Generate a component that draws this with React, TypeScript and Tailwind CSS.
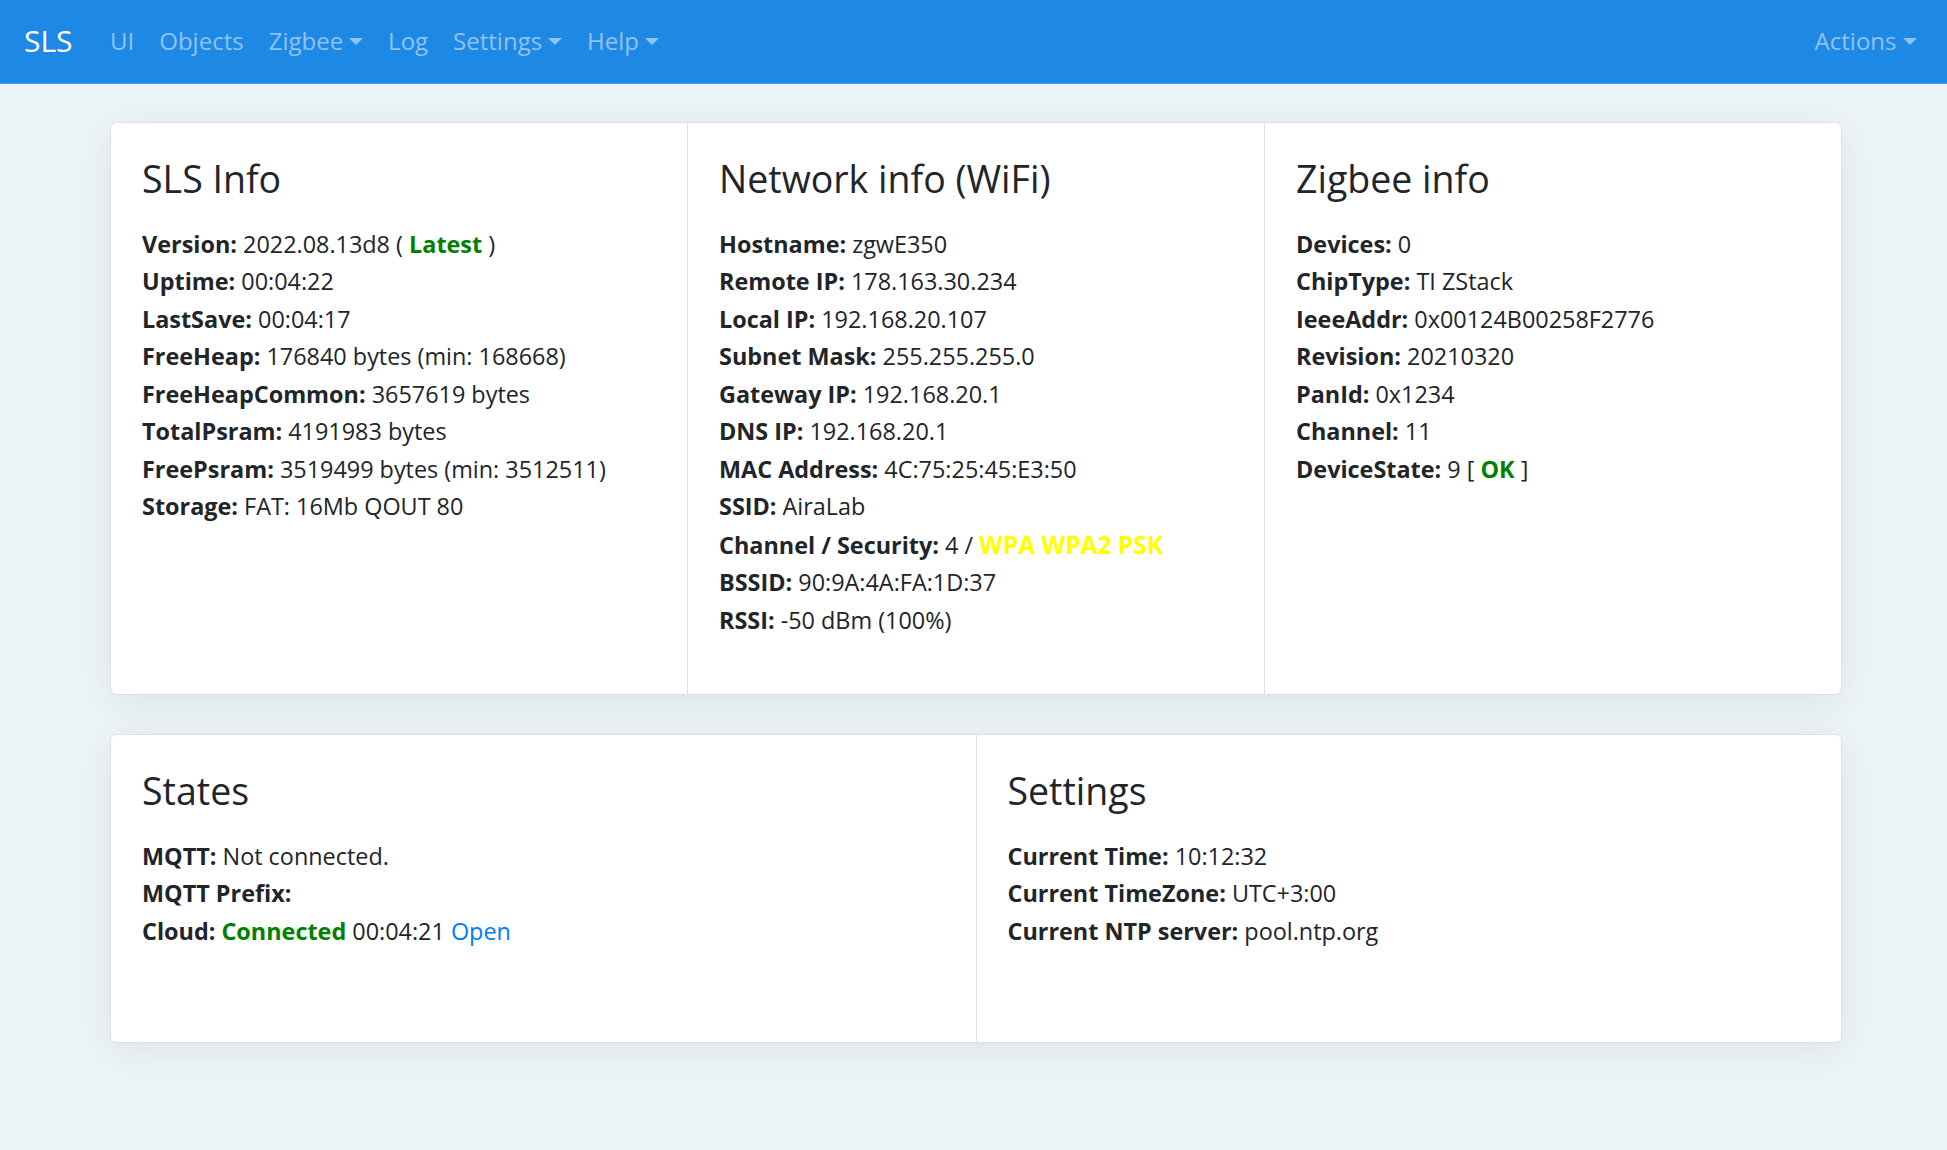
import React from 'react';

type Part = { text: string; className?: string };
type Row = { label: string; parts?: Part[] };

const slsInfo: Row[] = [
  { label: 'Version:', parts: [{ text: ' 2022.08.13d8 ( ' }, { text: 'Latest', className: 'font-bold text-[#008000]' }, { text: ' )' }] },
  { label: 'Uptime:', parts: [{ text: ' 00:04:22' }] },
  { label: 'LastSave:', parts: [{ text: ' 00:04:17' }] },
  { label: 'FreeHeap:', parts: [{ text: ' 176840 bytes (min: 168668)' }] },
  { label: 'FreeHeapCommon:', parts: [{ text: ' 3657619 bytes' }] },
  { label: 'TotalPsram:', parts: [{ text: ' 4191983 bytes' }] },
  { label: 'FreePsram:', parts: [{ text: ' 3519499 bytes (min: 3512511)' }] },
  { label: 'Storage:', parts: [{ text: ' FAT: 16Mb QOUT 80' }] },
];

const networkInfo: Row[] = [
  { label: 'Hostname:', parts: [{ text: ' zgwE350' }] },
  { label: 'Remote IP:', parts: [{ text: ' 178.163.30.234' }] },
  { label: 'Local IP:', parts: [{ text: ' 192.168.20.107' }] },
  { label: 'Subnet Mask:', parts: [{ text: ' 255.255.255.0' }] },
  { label: 'Gateway IP:', parts: [{ text: ' 192.168.20.1' }] },
  { label: 'DNS IP:', parts: [{ text: ' 192.168.20.1' }] },
  { label: 'MAC Address:', parts: [{ text: ' 4C:75:25:45:E3:50' }] },
  { label: 'SSID:', parts: [{ text: ' AiraLab' }] },
  { label: 'Channel / Security:', parts: [{ text: ' 4 / ' }, { text: 'WPA WPA2 PSK', className: 'font-bold text-[#ffff00] text-[24.5px]' }] },
  { label: 'BSSID:', parts: [{ text: ' 90:9A:4A:FA:1D:37' }] },
  { label: 'RSSI:', parts: [{ text: ' -50 dBm (100%)' }] },
];

const zigbeeInfo: Row[] = [
  { label: 'Devices:', parts: [{ text: ' 0' }] },
  { label: 'ChipType:', parts: [{ text: ' TI ZStack' }] },
  { label: 'IeeeAddr:', parts: [{ text: ' 0x00124B00258F2776' }] },
  { label: 'Revision:', parts: [{ text: ' 20210320' }] },
  { label: 'PanId:', parts: [{ text: ' 0x1234' }] },
  { label: 'Channel:', parts: [{ text: ' 11' }] },
  { label: 'DeviceState:', parts: [{ text: ' 9 [ ' }, { text: 'OK', className: 'font-bold text-[#008000]' }, { text: ' ]' }] },
];

const states: Row[] = [
  { label: 'MQTT:', parts: [{ text: ' Not connected.' }] },
  { label: 'MQTT Prefix:' },
  { label: 'Cloud:', parts: [{ text: ' ' }, { text: 'Connected', className: 'font-bold text-[#008000]' }, { text: ' 00:04:21 ' }, { text: 'Open', className: 'text-[#007bff]' }] },
];

const settings: Row[] = [
  { label: 'Current Time:', parts: [{ text: ' 10:12:32' }] },
  { label: 'Current TimeZone:', parts: [{ text: ' UTC+3:00' }] },
  { label: 'Current NTP server:', parts: [{ text: ' pool.ntp.org' }] },
];

function Caret() {
  return (
    <span className="ml-[6px] inline-block align-[5px] border-x-[7px] border-t-[7px] border-x-transparent border-t-current" />
  );
}

function NavItem({ label, dropdown }: { label: string; dropdown?: boolean }) {
  return (
    <a className="px-[12.5px] text-[24px] leading-[37.5px] text-white/50 whitespace-nowrap">
      {label}
      {dropdown && <Caret />}
    </a>
  );
}

function InfoCard({ title, rows, last, bottom }: { title: string; rows: Row[]; last?: boolean; bottom: string }) {
  return (
    <div className={`flex-1 min-w-0 px-[31px] pt-[32px] ${bottom} ${last ? '' : 'border-r border-black/[0.125]'}`}>
      <h3 className="text-[37.5px] leading-[48px] font-normal mb-[22.5px]">{title}</h3>
      <div>
        {rows.map((row) => (
          <div key={row.label} className="text-[23.4px] leading-[37.5px] whitespace-nowrap">
            <b className="font-bold">{row.label}</b>
            {row.parts?.map((p, i) => (
              <span key={i} className={p.className}>
                {p.text}
              </span>
            ))}
          </div>
        ))}
      </div>
    </div>
  );
}

export default function App() {
  return (
    <div className="min-h-screen bg-[#edf4f7] text-[#212529]" style={{ fontFamily: '"Open Sans", "Noto Sans", sans-serif' }}>
      <nav className="h-[84px] bg-[#1e88e5] border-b border-[#4a9eea] flex items-center pl-[24px] pr-[18px] pb-[2px]">
        <a className="text-[30px] text-white mr-[25px] leading-none">SLS</a>
        <NavItem label="UI" />
        <NavItem label="Objects" />
        <NavItem label="Zigbee" dropdown />
        <NavItem label="Log" />
        <NavItem label="Settings" dropdown />
        <NavItem label="Help" dropdown />
        <div className="ml-auto">
          <NavItem label="Actions" dropdown />
        </div>
      </nav>

      <div className="w-[1732px] ml-[110px] pt-[38px] pb-[100px]">
        <div className="flex bg-white border border-black/[0.125] rounded-[6px] shadow-[0_8px_40px_rgba(0,0,0,0.07)]">
          <InfoCard title="SLS Info" rows={slsInfo} bottom="pb-[55px]" />
          <InfoCard title="Network info (WiFi)" rows={networkInfo} bottom="pb-[55px]" />
          <InfoCard title="Zigbee info" rows={zigbeeInfo} bottom="pb-[55px]" last />
        </div>

        <div className="mt-[39px] flex bg-white border border-black/[0.125] rounded-[6px] shadow-[0_8px_40px_rgba(0,0,0,0.07)]">
          <InfoCard title="States" rows={states} bottom="pb-[92px]" />
          <InfoCard title="Settings" rows={settings} bottom="pb-[92px]" last />
        </div>
      </div>
    </div>
  );
}
